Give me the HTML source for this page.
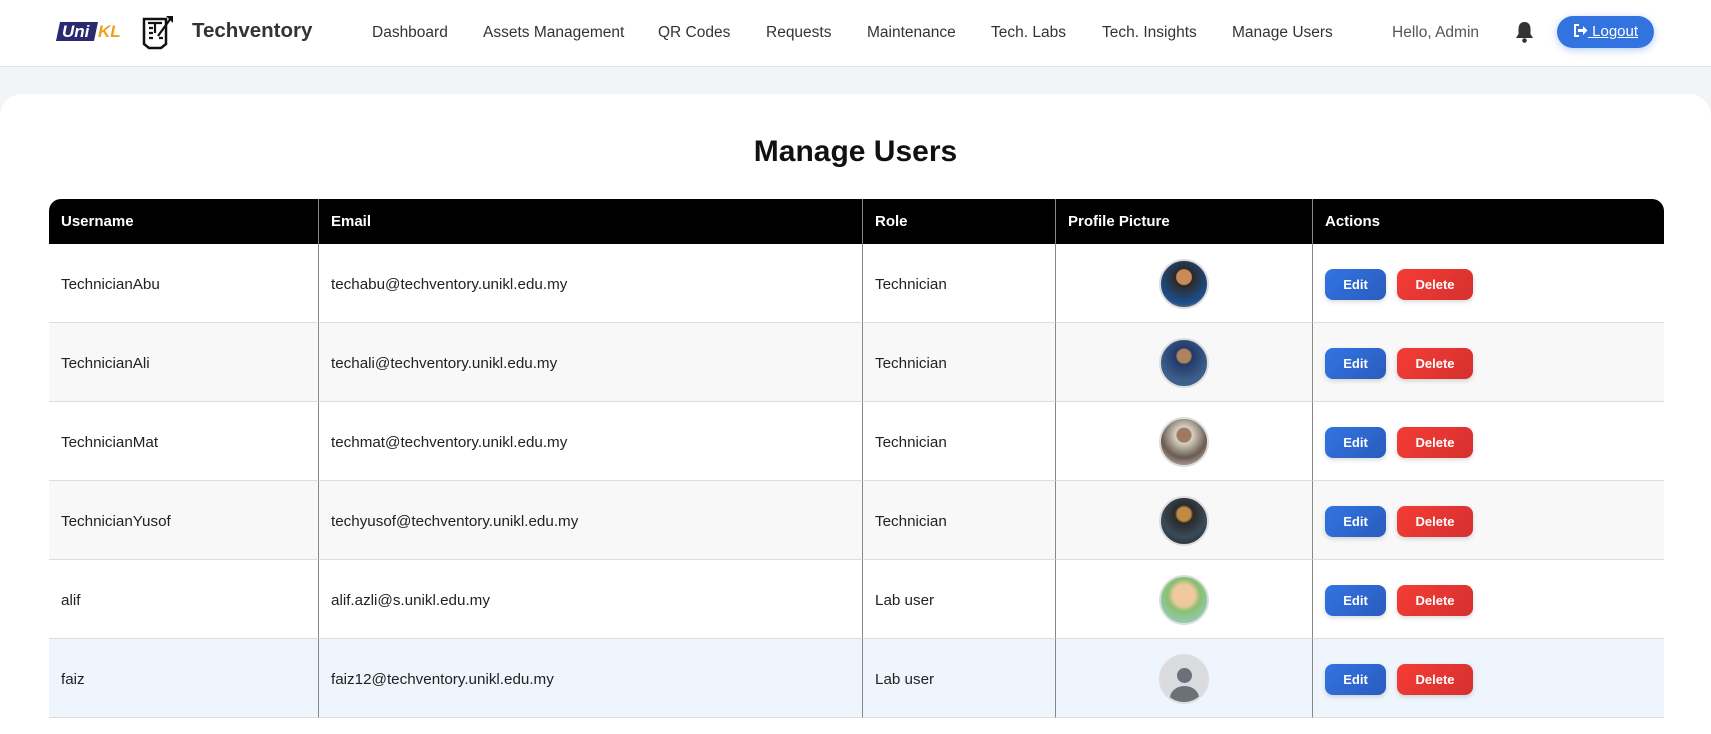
<!DOCTYPE html><html><head><meta charset="utf-8"><style>
*{box-sizing:border-box;margin:0;padding:0}
body{width:1711px;height:719px;overflow:hidden;background:#f3f4f6;font-family:"Liberation Sans",sans-serif;position:relative}
.nav{position:absolute;left:0;top:0;width:1711px;height:67px;background:#fff;border-bottom:1px solid #e2e2e2}
.a{position:absolute;top:23px;font-size:15.5px;color:#333;line-height:20px}
.card{position:absolute;left:0;top:94px;width:1711px;height:640px;background:#fff;border-radius:22px 22px 0 0}
h1{position:absolute;top:135px;left:0;width:1711px;text-align:center;font-size:30px;font-weight:bold;color:#111}
table{position:absolute;left:49px;top:199px;width:1615px;border-collapse:separate;border-spacing:0}
th{background:#000;color:#fff;font-size:15px;font-weight:bold;text-align:left;padding:0 12px;height:45px;border-left:1px solid #888}
th:first-child{border-left:none;border-top-left-radius:12px}th:last-child{border-top-right-radius:12px}
td{height:79px;padding:0 12px;padding-top:2px;font-size:15.2px;color:#222;border-left:1px solid #888;border-bottom:1px solid #ddd}
td:first-child{border-left:none}
tr:nth-child(odd) td{background:#f8f8f8}
tr.h td{background:#eef5fd}
.av{width:50px;height:50px;border-radius:50%;margin:0 auto;border:2px solid #ddd}
.b{display:inline-block;height:31px;line-height:31px;border-radius:8px;color:#fff;font-weight:bold;font-size:13px;text-align:center;box-shadow:0 2px 5px rgba(0,0,0,.15)}
.e{width:61px;background:linear-gradient(135deg,#3274e3,#2a5cbd)}
.d{width:76px;margin-left:11px;background:linear-gradient(135deg,#f53c35,#d5302f)}
</style></head><body>
<div class="nav">
<div style="position:absolute;left:58px;top:22px;width:66px;height:19px">
<div style="position:absolute;left:0;top:0;width:38px;height:19px;background:#2b2a6f;transform:skewX(-12deg)"></div>
<span style="position:absolute;left:4px;top:0;color:#fff;font-weight:bold;font-style:italic;font-size:17px;line-height:19px">Uni</span>
<span style="position:absolute;left:40px;top:0;color:#f0a020;font-weight:bold;font-style:italic;font-size:17px;line-height:19px">KL</span></div>
<svg style="position:absolute;left:142px;top:14px" width="33" height="36" viewBox="0 0 33 36"><path d="M2 5h22v25l-5 4H7l-5-4z" fill="none" stroke="#111" stroke-width="2.5"/><path d="M6 9h14M13 9v10M7 14h4M7 19h4M7 24h4M17 24h4M16 22l13-18" fill="none" stroke="#111" stroke-width="2.2"/><path d="M24 2h7v7z" fill="#111"/></svg>
<div style="position:absolute;left:192px;top:19px;font-size:20.5px;font-weight:bold;color:#333">Techventory</div>
<div class="a" style="left:372px">Dashboard</div><div class="a" style="left:483px">Assets Management</div><div class="a" style="left:658px">QR Codes</div><div class="a" style="left:766px">Requests</div><div class="a" style="left:867px">Maintenance</div><div class="a" style="left:991px">Tech. Labs</div><div class="a" style="left:1102px">Tech. Insights</div><div class="a" style="left:1232px">Manage Users</div>
<div class="a" style="left:1392px;color:#555">Hello, Admin</div>
<svg style="position:absolute;left:1515px;top:21px" width="19" height="22" viewBox="0 0 19 22"><path d="M9.5 1c-4 0-6 3-6 7v5l-2.5 4h17l-2.5-4V8c0-4-2-7-6-7z" fill="#333"/><circle cx="9.5" cy="19.5" r="2.3" fill="#333"/></svg>
<div style="position:absolute;left:1557px;top:16px;width:97px;height:32px;border-radius:16px;background:#3273e0;box-shadow:0 2px 8px rgba(50,115,224,.35);color:#fff;font-size:15px;line-height:32px;text-align:center"><svg width="15" height="13" viewBox="0 0 15 13" style="vertical-align:-1px"><path d="M6 1H2v11h4" fill="none" stroke="#fff" stroke-width="2"/><path d="M5 5h5V2l4.5 4.5L10 11V8H5z" fill="#fff"/></svg><u> Logout</u></div>
</div>
<div class="card"></div>
<h1>Manage Users</h1>
<table>
<tr><th style="width:269px">Username</th><th style="width:544px">Email</th><th style="width:193px">Role</th><th style="width:257px">Profile Picture</th><th>Actions</th></tr>
<tr><td>TechnicianAbu</td><td>techabu@techventory.unikl.edu.my</td><td>Technician</td><td><div class="av" style="background:radial-gradient(circle at 50% 35%,#c98a5a 0 20%,#2a2a2a 22%,#1e4f90 70%,#d67a20)"></div></td><td><span class="b e">Edit</span><span class="b d">Delete</span></td></tr>
<tr><td>TechnicianAli</td><td>techali@techventory.unikl.edu.my</td><td>Technician</td><td><div class="av" style="background:radial-gradient(circle at 50% 35%,#b08060 0 18%,#223a66 22%,#3a5a8a 60%,#4a6a8a)"></div></td><td><span class="b e">Edit</span><span class="b d">Delete</span></td></tr>
<tr><td>TechnicianMat</td><td>techmat@techventory.unikl.edu.my</td><td>Technician</td><td><div class="av" style="background:radial-gradient(circle at 50% 35%,#a07a60 0 18%,#d8d0c4 22%,#6a5a50 60%,#e0d8cc)"></div></td><td><span class="b e">Edit</span><span class="b d">Delete</span></td></tr>
<tr><td>TechnicianYusof</td><td>techyusof@techventory.unikl.edu.my</td><td>Technician</td><td><div class="av" style="background:radial-gradient(circle at 50% 35%,#c08a40 0 18%,#2a2a2a 24%,#3a4a5a 60%,#222)"></div></td><td><span class="b e">Edit</span><span class="b d">Delete</span></td></tr>
<tr><td>alif</td><td>alif.azli@s.unikl.edu.my</td><td>Lab user</td><td><div class="av" style="background:radial-gradient(circle at 50% 40%,#f0c8a0 0 30%,#8ac070 45%,#9ad0e8)"></div></td><td><span class="b e">Edit</span><span class="b d">Delete</span></td></tr>
<tr class="h"><td>faiz</td><td>faiz12@techventory.unikl.edu.my</td><td>Lab user</td><td><div class="av" style="background:#d9dbdf;position:relative;overflow:hidden"><div style="position:absolute;left:16px;top:12px;width:15px;height:15px;border-radius:50%;background:#6b7079"></div><div style="position:absolute;left:9px;top:30px;width:29px;height:24px;border-radius:50% 50% 0 0;background:#6b7079"></div></div></td><td><span class="b e">Edit</span><span class="b d">Delete</span></td></tr>
</table>
</body></html>
